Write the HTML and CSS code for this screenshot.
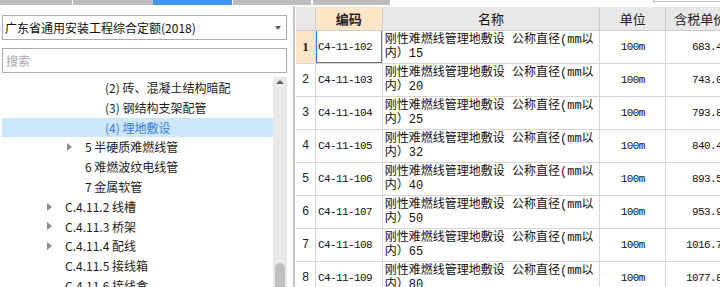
FILE: index.html
```html
<!DOCTYPE html>
<html lang="zh">
<head>
<meta charset="utf-8">
<title>定额</title>
<link rel="stylesheet" href="styles.css">
</head>
<body>
<div class="strip">
  <span class="seg s1"></span><span class="seg s2"></span><span class="seg s3"></span><span class="seg s4"></span><span class="seg s5"></span><span class="s6"></span>
</div>
<div class="main">
  <aside class="left">
    <div class="select"><span class="select-text">广东省通用安装工程综合定额(2018)</span><span class="caret"></span></div>
    <div class="search">搜索</div>
    <div class="treebox">
      <ul class="tree">
        <li class="node l4"><span class="tw"></span><span class="lbl">(2) 砖、混凝土结构暗配</span></li>
        <li class="node l4"><span class="tw"></span><span class="lbl">(3) 钢结构支架配管</span></li>
        <li class="node l4 sel"><span class="tw"></span><span class="lbl">(4) 埋地敷设</span></li>
        <li class="node l3"><span class="tw"><i class="arrow"></i></span><span class="lbl">5 半硬质难燃线管</span></li>
        <li class="node l3"><span class="tw"></span><span class="lbl">6 难燃波纹电线管</span></li>
        <li class="node l3"><span class="tw"></span><span class="lbl">7 金属软管</span></li>
        <li class="node l2"><span class="tw"><i class="arrow"></i></span><span class="lbl">C.4.11.2 线槽</span></li>
        <li class="node l2"><span class="tw"><i class="arrow"></i></span><span class="lbl">C.4.11.3 桥架</span></li>
        <li class="node l2"><span class="tw"><i class="arrow"></i></span><span class="lbl">C.4.11.4 配线</span></li>
        <li class="node l2"><span class="tw"></span><span class="lbl">C.4.11.5 接线箱</span></li>
        <li class="node l2"><span class="tw"></span><span class="lbl">C.4.11.6 接线盒</span></li>
      </ul>
      <div class="vscroll"><span class="up"></span><span class="thumb"></span></div>
    </div>
  </aside>
  <div class="split"></div>
  <section class="grid">
    <div class="row head">
      <div class="c rh"></div>
      <div class="c code hl"><b>编码</b></div>
      <div class="c name">名称</div>
      <div class="c unit">单位</div>
      <div class="c price">含税单价</div>
    </div>
    <div class="row">
      <div class="c rh hl"><b class="n1">1</b></div>
      <div class="c code focus">C4-11-102</div>
      <div class="c name">刚性难燃线管理地敷设 公称直径(mm以<br>内）15</div>
      <div class="c unit">100m</div>
      <div class="c price">683.45</div>
    </div>
    <div class="row">
      <div class="c rh">2</div>
      <div class="c code">C4-11-103</div>
      <div class="c name">刚性难燃线管理地敷设 公称直径(mm以<br>内）20</div>
      <div class="c unit">100m</div>
      <div class="c price">743.06</div>
    </div>
    <div class="row">
      <div class="c rh">3</div>
      <div class="c code">C4-11-104</div>
      <div class="c name">刚性难燃线管理地敷设 公称直径(mm以<br>内）25</div>
      <div class="c unit">100m</div>
      <div class="c price">793.82</div>
    </div>
    <div class="row">
      <div class="c rh">4</div>
      <div class="c code">C4-11-105</div>
      <div class="c name">刚性难燃线管理地敷设 公称直径(mm以<br>内）32</div>
      <div class="c unit">100m</div>
      <div class="c price">840.41</div>
    </div>
    <div class="row">
      <div class="c rh">5</div>
      <div class="c code">C4-11-106</div>
      <div class="c name">刚性难燃线管理地敷设 公称直径(mm以<br>内）40</div>
      <div class="c unit">100m</div>
      <div class="c price">893.57</div>
    </div>
    <div class="row">
      <div class="c rh">6</div>
      <div class="c code">C4-11-107</div>
      <div class="c name">刚性难燃线管理地敷设 公称直径(mm以<br>内）50</div>
      <div class="c unit">100m</div>
      <div class="c price">953.93</div>
    </div>
    <div class="row">
      <div class="c rh">7</div>
      <div class="c code">C4-11-108</div>
      <div class="c name">刚性难燃线管理地敷设 公称直径(mm以<br>内）65</div>
      <div class="c unit">100m</div>
      <div class="c price">1016.74</div>
    </div>
    <div class="row">
      <div class="c rh">8</div>
      <div class="c code">C4-11-109</div>
      <div class="c name">刚性难燃线管理地敷设 公称直径(mm以<br>内）80</div>
      <div class="c unit">100m</div>
      <div class="c price">1077.85</div>
    </div>
  </section>
</div>
</body>
</html>
```

FILE: styles.css
```css
* { box-sizing: border-box; }
html, body { margin: 0; padding: 0; }
body {
  width: 720px;
  height: 287px;
  overflow: hidden;
  background: #fff;
  font-family: "Noto Sans CJK SC", sans-serif;
  font-size: 12px;
  color: #1a1a1a;
}

/* top tab strip */
.strip { display: flex; height: 5px; }
.seg { display: block; height: 5px; background: #bdbdbd; }
.s1 { width: 72px; }
.s2 { width: 80px; margin-left: 1px; }
.s3 { width: 79px; background: #4296f4; }
.s4 { width: 78px; margin-left: 1px; }
.s5 { width: 77px; margin-left: 2px; }
.s6 { display: block; width: 67px; height: 2px; margin-left: 263px; border-left: 1px solid #bdbdbd; border-bottom: 1px solid #bdbdbd; }

.main { display: flex; height: 282px; }

/* left panel */
.left { flex: none; width: 293px; padding: 10px 0 0 2px; }
.select {
  width: 285px; height: 25px;
  border: 1px solid #ababab;
  display: flex; align-items: center;
  padding-left: 2px;
  color: #111;
}
.select-text { flex: 1; line-height: 20px; }
.caret {
  width: 0; height: 0;
  margin-right: 5px;
  border-left: 3.5px solid transparent;
  border-right: 3.5px solid transparent;
  border-top: 4px solid #606060;
}
.search {
  width: 285px; height: 25px;
  margin-top: 8px;
  border: 1px solid #ababab;
  padding-left: 3px;
  line-height: 23px;
  color: #a8a8a8;
}
.treebox { display: flex; width: 285px; height: 210px; margin-top: 4px; overflow: hidden; }
.tree { flex: none; width: 271px; margin: 0; padding: 1px 0 0 0; list-style: none; }
.node { display: flex; align-items: center; height: 19.8px; line-height: 19.8px; white-space: nowrap; color: #1c1c1c; }
.l4 { padding-left: 81px; }
.l3 { padding-left: 61px; }
.l2 { padding-left: 41px; }
.tw { flex: none; width: 22px; height: 19px; display: flex; align-items: center; padding-left: 4px; }
.arrow {
  display: block; width: 0; height: 0;
  border-left: 5px solid #8a8a8a;
  border-top: 4px solid transparent;
  border-bottom: 4px solid transparent;
}
.node.sel { background: #cce6fc; color: #3b7bd6; }

.vscroll { flex: none; width: 14px; height: 100%; background: #e8e8e8; display: flex; flex-direction: column; align-items: center; }
.up {
  display: block; width: 0; height: 0; margin-top: 3px;
  border-left: 4px solid transparent;
  border-right: 4px solid transparent;
  border-bottom: 4px solid #5f5f5f;
}
.thumb { display: block; width: 10px; height: 30px; margin-top: auto; margin-bottom: -6px; background: #c1c1c1; border-radius: 5px; }

.split { flex: none; width: 3px; margin-top: 1px; border-left: 2px solid #c3c3c3; }

/* data grid */
.grid { flex: none; width: 436px; padding-top: 2px; }
.row { display: flex; height: 33px; border-bottom: 1px solid #d6d6d6; }
.row.head { height: 24px; background: #e8e8e8; border-bottom: 1px solid #cbcbcb; font-size: 13px; color: #222; }
.c { position: relative; height: 100%; border-right: 1px solid #d6d6d6; display: flex; align-items: center; white-space: nowrap; overflow: hidden; }
.head .c { justify-content: center; border-right-color: #cdcdcd; }
.rh { width: 20px; justify-content: center; font-family: "Liberation Mono", monospace; font-size: 12px; color: #222; }
.code { width: 67px; padding-left: 2px; font-family: "Liberation Mono", monospace; font-size: 11px; letter-spacing: -0.6px; color: #111; }
.name { width: 218px; padding: 2px 0 0 2px; display: block; line-height: 14px; font-family: "Liberation Mono", "Noto Sans CJK SC", monospace; font-size: 12px; color: #111; }
.head .name { display: flex; padding: 0; line-height: normal; font-family: "Noto Sans CJK SC", sans-serif; font-size: 13px; }
.unit { width: 66px; justify-content: center; font-family: "Liberation Mono", monospace; font-size: 11px; letter-spacing: -0.6px; color: #111; }
.price { width: 66px; justify-content: flex-end; padding-right: 4px; font-family: "Liberation Mono", monospace; font-size: 11px; letter-spacing: -0.6px; color: #111; border-right: none; }
.head .code, .head .unit, .head .price { font-family: "Noto Sans CJK SC", sans-serif; font-size: 13px; letter-spacing: 0; padding: 0; color: #222; }
.head .price { justify-content: flex-start; padding-left: 8px; }
.hl { background: #fde5c8; }
.head .hl { background: #fde5c8; }
.n1 { font-family: "Liberation Serif", serif; font-size: 13px; font-weight: bold; }
.focus::after {
  content: "";
  position: absolute;
  left: -1px; top: -1px; right: -1px; bottom: -1px;
  border: 2px solid #727272;
  border-top-width: 1px;
  border-left-color: #2a7de8;
}
```
